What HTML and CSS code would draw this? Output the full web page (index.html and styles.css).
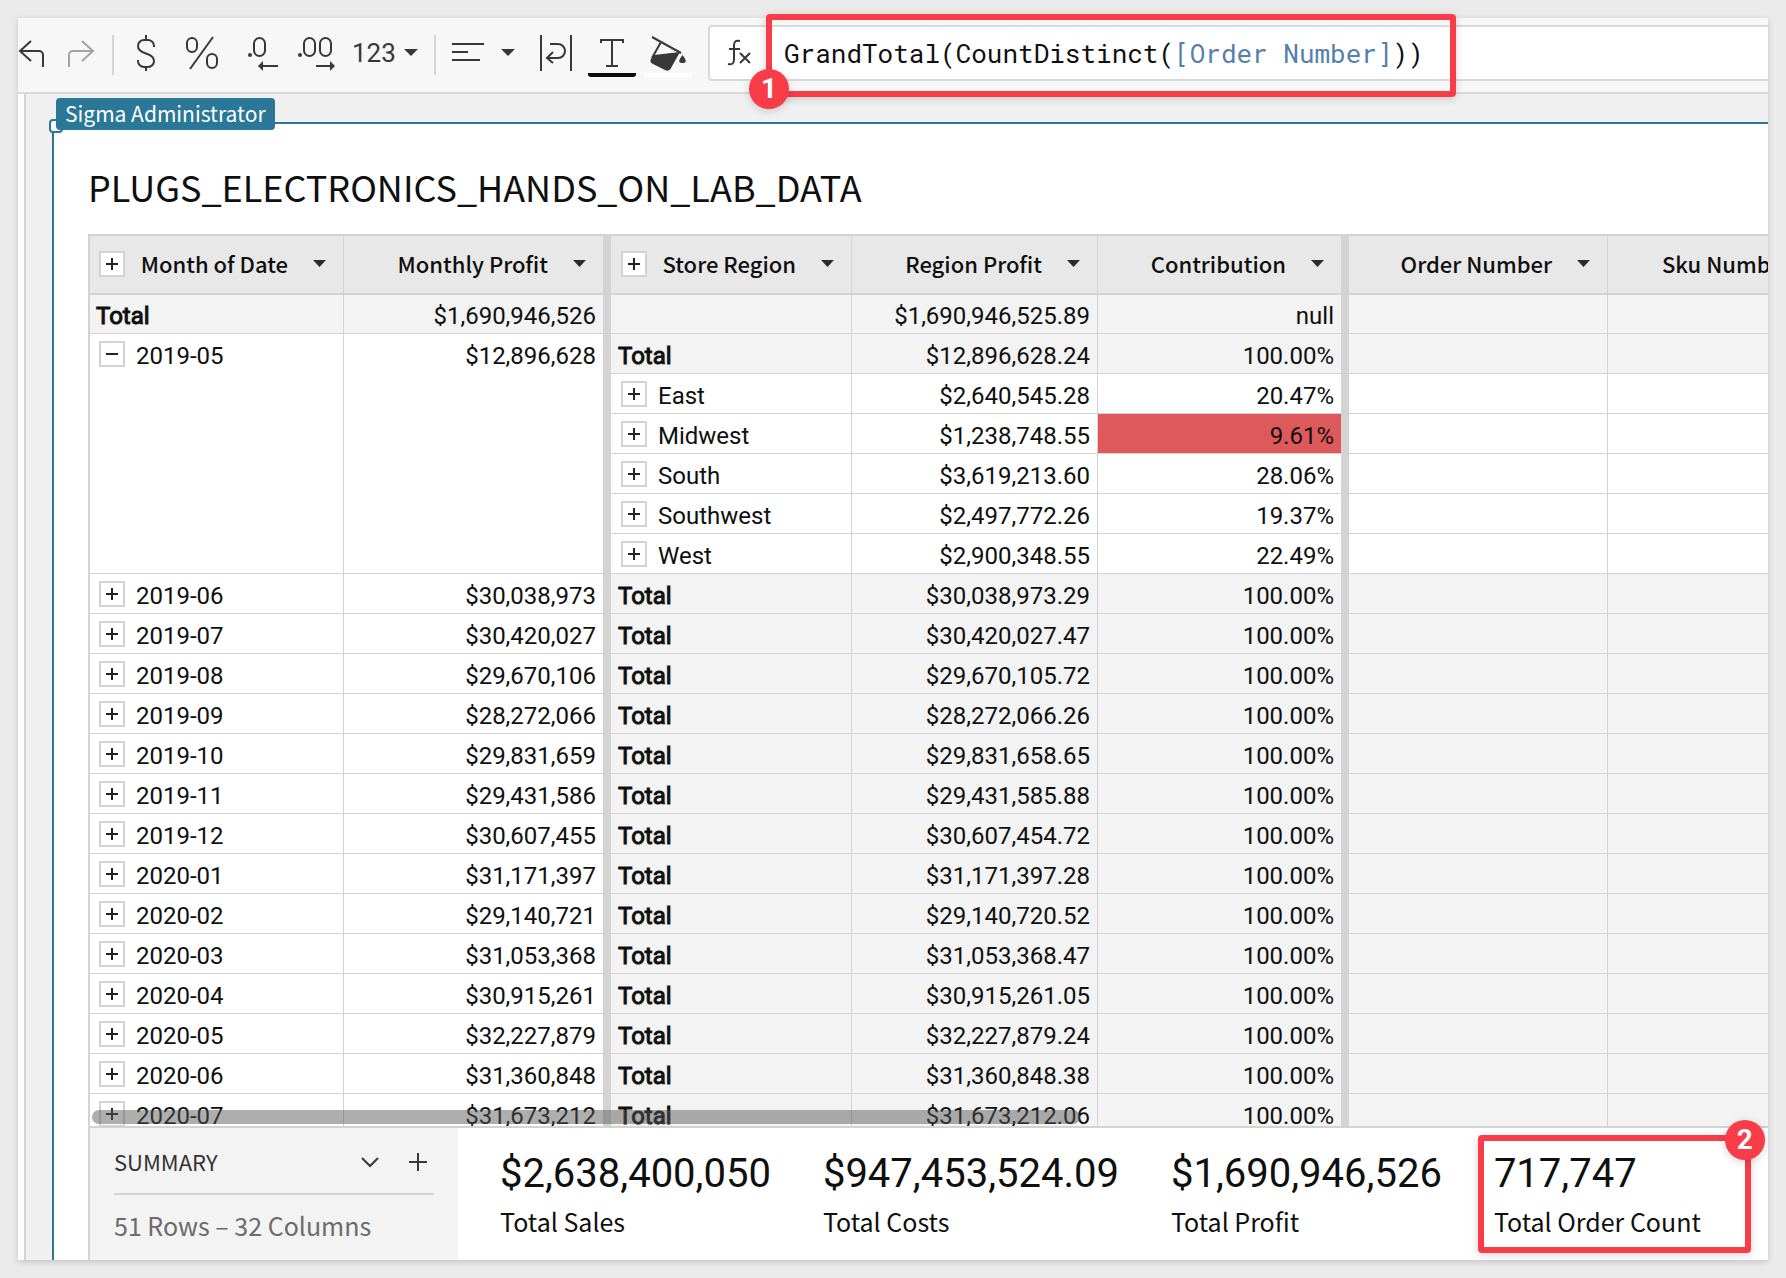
FILE: index.html
```html
<!DOCTYPE html>
<html lang="en">
<head>
<meta charset="utf-8">
<title>PLUGS_ELECTRONICS_HANDS_ON_LAB_DATA</title>
<link rel="stylesheet" href="styles.css">
</head>
<body>
<main class="app">
  <header class="toolbar">
    <button class="tool" aria-label="Undo"><svg width="32" height="44"><path d="M13 8 2 18l11 10M2 18h19a4 4 0 0 1 4 4v12"/></svg></button>
    <button class="tool muted" aria-label="Redo"><svg width="30" height="44"><path d="M16 8l11 10-11 10M27 18H7a4 4 0 0 0-4 4v12"/></svg></button>
    <span class="separator"></span>
    <button class="tool" aria-label="Currency"><svg width="32" height="44"><path d="M24 14v-1a6 6 0 0 0-6-6h-4a6 6 0 0 0-6 6c0 4 3 6 8 7.500s8 3.500 8 7.500a6 6 0 0 1-6 6h-4a6 6 0 0 1-6-6v-1M16 2v5M16 34v4"/></svg></button>
    <button class="tool" aria-label="Percent"><svg width="48" height="44"><rect x="9" y="5" width="10" height="14" rx="5"/><rect x="29" y="21" width="10" height="14" rx="5"/><path d="M35 4 12 36"/></svg></button>
    <button class="tool" aria-label="Decrease decimals"><svg width="38" height="44"><circle class="solid" cx="8" cy="22" r="2"/><rect x="12" y="5" width="11" height="18" rx="5.500"/><path d="M20 33h16"/><path class="solid" d="M16 33l5-5v10z"/></svg></button>
    <button class="tool" aria-label="Increase decimals"><svg width="40" height="44"><circle class="solid" cx="4" cy="22" r="2"/><rect x="8" y="5" width="11" height="18" rx="5.500"/><rect x="24" y="5" width="11" height="18" rx="5.500"/><path d="M20 33h15"/><path class="solid" d="M39 33l-5-5v10z"/></svg></button>
    <button class="tool format">123<svg width="14" height="8"><path class="solid" d="M0 0h14L7 7z"/></svg></button>
    <span class="separator"></span>
    <button class="tool" aria-label="Align"><svg width="64" height="44"><path d="M0 11h32M0 19h16M0 27h28"/><path class="solid" d="M49 16h14l-7 7z"/></svg></button>
    <button class="tool" aria-label="Wrap text"><svg width="40" height="44"><path d="M9 2v36M39 2v36M18 11h8a7 7 0 0 1 0 14H15M21 19l-6 6 6 5"/></svg></button>
    <div class="colors">
      <button class="tool" aria-label="Text color"><svg width="48" height="44"><path d="M13 10V7h22v3M24 7v26M18 33h12"/><path class="ink" d="M0 40h48v1a3 3 0 0 1-3 3H3a3 3 0 0 1-3-3z"/></svg></button>
      <button class="tool" aria-label="Fill color"><svg width="48" height="44"><path d="M8 4l29 16M17 9 8 25"/><path class="solid" d="M10 22l26-3-9 16q-2 4-6 2L9 31q-4-2-2-5zM38.500 22q6.500 8 0 8t0-8z"/><path class="paper" d="M0 40h48v1a3 3 0 0 1-3 3H3a3 3 0 0 1-3-3z"/></svg></button>
    </div>
    <div class="formula">
      <svg class="fx" width="28" height="30" aria-hidden="true"><path d="M13 3c-5-1-6 1-6 5v13c0 4-1 6-6 5M2 11h11M13 15l10 10M23 15 13 25"/></svg>
      <div class="code" role="textbox" aria-label="Formula" contenteditable="true" spellcheck="false">GrandTotal(CountDistinct(<span class="ref">[Order Number]</span>))</div>
      <div class="callout callout-formula"><span class="badge">1</span></div>
    </div>
  </header>

  <div class="canvas">
    <section class="element">
      <span class="handle"></span>
      <span class="owner">Sigma Administrator</span>
      <h1 class="title">PLUGS_ELECTRONICS_HANDS_ON_LAB_DATA</h1>
      <div class="grid">
        <table>
          <colgroup><col class="c1"><col class="c2"><col class="c3"><col class="c4"><col class="c5"><col class="c6"><col class="c7"></colgroup>
          <thead>
            <tr>
              <th><div class="head"><button class="toggle" aria-label="Expand all"></button><span>Month of Date</span><button class="caret" aria-label="Column menu"></button></div></th>
              <th class="edge"><div class="head"><span>Monthly Profit</span><button class="caret" aria-label="Column menu"></button></div></th>
              <th><div class="head"><button class="toggle" aria-label="Expand all"></button><span>Store Region</span><button class="caret" aria-label="Column menu"></button></div></th>
              <th><div class="head"><span>Region Profit</span><button class="caret" aria-label="Column menu"></button></div></th>
              <th class="edge"><div class="head"><span>Contribution</span><button class="caret" aria-label="Column menu"></button></div></th>
              <th><div class="head"><span>Order Number</span><button class="caret" aria-label="Column menu"></button></div></th>
              <th><div class="head"><span>Sku Number</span><button class="caret" aria-label="Column menu"></button></div></th>
            </tr>
          </thead>
          <tbody>
            <tr class="grand"><td class="total">Total</td><td class="num edge">$1,690,946,526</td><td></td><td class="num">$1,690,946,525.89</td><td class="num edge">null</td><td></td><td></td></tr>
            <tr class="sum"><td class="key" rowspan="6"><div class="item"><button class="toggle open" aria-label="Collapse"></button>2019-05</div></td><td class="key num edge" rowspan="6">$12,896,628</td><td class="total">Total</td><td class="num">$12,896,628.24</td><td class="num edge">100.00%</td><td></td><td></td></tr>
            <tr><td class="region"><div class="item"><button class="toggle" aria-label="Expand"></button>East</div></td><td class="num">$2,640,545.28</td><td class="num edge">20.47%</td><td></td><td></td></tr>
            <tr><td class="region"><div class="item"><button class="toggle" aria-label="Expand"></button>Midwest</div></td><td class="num">$1,238,748.55</td><td class="num edge alert">9.61%</td><td></td><td></td></tr>
            <tr><td class="region"><div class="item"><button class="toggle" aria-label="Expand"></button>South</div></td><td class="num">$3,619,213.60</td><td class="num edge">28.06%</td><td></td><td></td></tr>
            <tr><td class="region"><div class="item"><button class="toggle" aria-label="Expand"></button>Southwest</div></td><td class="num">$2,497,772.26</td><td class="num edge">19.37%</td><td></td><td></td></tr>
            <tr><td class="region"><div class="item"><button class="toggle" aria-label="Expand"></button>West</div></td><td class="num">$2,900,348.55</td><td class="num edge">22.49%</td><td></td><td></td></tr>
            <tr class="sum"><td class="key"><div class="item"><button class="toggle" aria-label="Expand"></button>2019-06</div></td><td class="key num edge">$30,038,973</td><td class="total">Total</td><td class="num">$30,038,973.29</td><td class="num edge">100.00%</td><td></td><td></td></tr>
            <tr class="sum"><td class="key"><div class="item"><button class="toggle" aria-label="Expand"></button>2019-07</div></td><td class="key num edge">$30,420,027</td><td class="total">Total</td><td class="num">$30,420,027.47</td><td class="num edge">100.00%</td><td></td><td></td></tr>
            <tr class="sum"><td class="key"><div class="item"><button class="toggle" aria-label="Expand"></button>2019-08</div></td><td class="key num edge">$29,670,106</td><td class="total">Total</td><td class="num">$29,670,105.72</td><td class="num edge">100.00%</td><td></td><td></td></tr>
            <tr class="sum"><td class="key"><div class="item"><button class="toggle" aria-label="Expand"></button>2019-09</div></td><td class="key num edge">$28,272,066</td><td class="total">Total</td><td class="num">$28,272,066.26</td><td class="num edge">100.00%</td><td></td><td></td></tr>
            <tr class="sum"><td class="key"><div class="item"><button class="toggle" aria-label="Expand"></button>2019-10</div></td><td class="key num edge">$29,831,659</td><td class="total">Total</td><td class="num">$29,831,658.65</td><td class="num edge">100.00%</td><td></td><td></td></tr>
            <tr class="sum"><td class="key"><div class="item"><button class="toggle" aria-label="Expand"></button>2019-11</div></td><td class="key num edge">$29,431,586</td><td class="total">Total</td><td class="num">$29,431,585.88</td><td class="num edge">100.00%</td><td></td><td></td></tr>
            <tr class="sum"><td class="key"><div class="item"><button class="toggle" aria-label="Expand"></button>2019-12</div></td><td class="key num edge">$30,607,455</td><td class="total">Total</td><td class="num">$30,607,454.72</td><td class="num edge">100.00%</td><td></td><td></td></tr>
            <tr class="sum"><td class="key"><div class="item"><button class="toggle" aria-label="Expand"></button>2020-01</div></td><td class="key num edge">$31,171,397</td><td class="total">Total</td><td class="num">$31,171,397.28</td><td class="num edge">100.00%</td><td></td><td></td></tr>
            <tr class="sum"><td class="key"><div class="item"><button class="toggle" aria-label="Expand"></button>2020-02</div></td><td class="key num edge">$29,140,721</td><td class="total">Total</td><td class="num">$29,140,720.52</td><td class="num edge">100.00%</td><td></td><td></td></tr>
            <tr class="sum"><td class="key"><div class="item"><button class="toggle" aria-label="Expand"></button>2020-03</div></td><td class="key num edge">$31,053,368</td><td class="total">Total</td><td class="num">$31,053,368.47</td><td class="num edge">100.00%</td><td></td><td></td></tr>
            <tr class="sum"><td class="key"><div class="item"><button class="toggle" aria-label="Expand"></button>2020-04</div></td><td class="key num edge">$30,915,261</td><td class="total">Total</td><td class="num">$30,915,261.05</td><td class="num edge">100.00%</td><td></td><td></td></tr>
            <tr class="sum"><td class="key"><div class="item"><button class="toggle" aria-label="Expand"></button>2020-05</div></td><td class="key num edge">$32,227,879</td><td class="total">Total</td><td class="num">$32,227,879.24</td><td class="num edge">100.00%</td><td></td><td></td></tr>
            <tr class="sum"><td class="key"><div class="item"><button class="toggle" aria-label="Expand"></button>2020-06</div></td><td class="key num edge">$31,360,848</td><td class="total">Total</td><td class="num">$31,360,848.38</td><td class="num edge">100.00%</td><td></td><td></td></tr>
            <tr class="sum"><td class="key"><div class="item"><button class="toggle" aria-label="Expand"></button>2020-07</div></td><td class="key num edge">$31,673,212</td><td class="total">Total</td><td class="num">$31,673,212.06</td><td class="num edge">100.00%</td><td></td><td></td></tr>
          </tbody>
        </table>
        <span class="scrollbar"></span>
      </div>
      <footer class="summary">
        <div class="panel">
          <div class="panel-head">
            <h2>SUMMARY</h2>
            <button class="tool" aria-label="Collapse summary"><svg width="20" height="20"><path d="M2 6l8 8 8-8"/></svg></button>
            <button class="tool" aria-label="Add summary"><svg width="20" height="20"><path d="M10 1v18M1 10h18"/></svg></button>
          </div>
          <p class="counts">51 Rows – 32 Columns</p>
        </div>
        <dl class="metrics">
          <div class="metric"><dd>$2,638,400,050</dd><dt>Total Sales</dt></div>
          <div class="metric"><dd>$947,453,524.09</dd><dt>Total Costs</dt></div>
          <div class="metric"><dd>$1,690,946,526</dd><dt>Total Profit</dt></div>
          <div class="metric"><dd>717,747</dd><dt>Total Order Count</dt><div class="callout callout-metric"><span class="badge">2</span></div></div>
        </dl>
      </footer>
    </section>
  </div>
</main>
</body>
</html>
```
FILE: styles.css
```css
:root {
  --line: #d3d3d3;
  --teal: #2a7797;
  --red: #f83d49;
  --ink: #0f0f0f;
  --icon: #383838;
  --ui: "Source Sans Pro", "Noto Sans CJK SC", sans-serif;
  --data: Roboto, "Liberation Sans", sans-serif;
}

* { box-sizing: border-box; }

body {
  margin: 0;
  padding: 18px;
  background: #eaeaea;
  color: var(--ink);
  font-family: var(--ui);
  overflow: hidden;
}

h1, h2, p, dl, dd, dt { margin: 0; font-weight: 400; }

button {
  padding: 0;
  border: 0;
  background: none;
  color: inherit;
  font: inherit;
}

svg {
  display: block;
  fill: none;
  stroke: var(--icon);
  stroke-width: 2;
}

.solid { fill: var(--icon); stroke: none; }
.ink { fill: #0a0a0a; stroke: none; }
.paper { fill: #fff; stroke: none; }

.app {
  display: flex;
  flex-direction: column;
  height: calc(100vh - 36px);
  box-shadow: 0 2px 6px rgba(0, 0, 0, 0.16);
}

/* Toolbar */
.toolbar {
  display: flex;
  align-items: center;
  gap: 16px;
  height: 76px;
  flex: none;
  background: #f7f7f7;
  border-bottom: 2px solid #d9d9d9;
}

.tool { flex: none; }
.muted svg { stroke: #a3a3a3; }
.separator { flex: none; width: 2px; height: 40px; background: #d6d6d6; }

.format {
  display: flex;
  align-items: center;
  justify-content: space-between;
  width: 66px;
  padding-bottom: 4px;
  color: var(--icon);
  font: 26px/40px var(--data);
}

.colors { display: flex; gap: 8px; }

.formula {
  position: relative;
  flex: 1;
  min-width: 0;
  display: flex;
  align-items: center;
  gap: 29px;
  height: 56px;
  margin-bottom: 4px;
  padding-left: 17px;
  background: #fff;
  border: 2px solid #d9d9d9;
  border-right: 0;
  border-radius: 4px 0 0 4px;
}

.fx { flex: none; }

.code {
  font: 26px/40px "Roboto Mono", "Liberation Mono", monospace;
  white-space: nowrap;
  outline: 0;
}

.ref { color: #5480ad; }

/* Numbered annotations */
.callout {
  position: absolute;
  border: 6px solid var(--red);
  border-radius: 4px;
  box-shadow: 0 2px 8px rgba(0, 0, 0, 0.16);
  pointer-events: none;
}

.badge {
  position: absolute;
  width: 40px;
  height: 40px;
  border-radius: 50%;
  background: var(--red);
  box-shadow: 0 2px 8px rgba(0, 0, 0, 0.16);
  color: #fff;
  font: 700 28px/40px var(--data);
  text-align: center;
}

.callout-formula { left: 56px; top: -13px; width: 690px; height: 83px; z-index: 2; }
.callout-formula .badge { left: -23px; bottom: -18px; }
.callout-metric { left: -16px; top: -11px; width: 273px; height: 118px; z-index: 2; }
.callout-metric .badge { right: -20px; top: -21px; }

/* Canvas */
.canvas {
  flex: 1;
  min-height: 0;
  display: flex;
  padding: 28px 0 0 26px;
  overflow: hidden;
  background: #f0f0f0;
  border-left: 2px solid var(--line);
  margin-left: 6px;
  box-shadow: -6px 0 0 #fff;
}

.element {
  position: relative;
  flex: 1;
  min-width: 0;
  display: flex;
  flex-direction: column;
  padding-left: 34px;
  background: #fff;
  border-left: 2px solid var(--teal);
  border-top: 2px solid var(--teal);
}

.handle {
  position: absolute;
  left: -5px;
  top: -5px;
  width: 14px;
  height: 14px;
  background: #fff;
  border: 2px solid var(--teal);
  border-radius: 4px;
}

.owner {
  position: absolute;
  left: 2px;
  top: -26px;
  padding: 0 9px 2px;
  border-radius: 4px;
  background: var(--teal);
  color: #fff;
  font-size: 21px;
  line-height: 30px;
}

.title {
  padding: 38px 0 24px;
  font-size: 36px;
  line-height: 48px;
  white-space: nowrap;
}

/* Pivot table */
.grid {
  position: relative;
  flex: 1 1 0;
  min-height: 0;
  overflow: hidden;
  border-left: 2px solid var(--line);
  border-top: 2px solid var(--line);
}

table {
  width: 1758px;
  table-layout: fixed;
  border-collapse: separate;
  border-spacing: 0;
}

.c1 { width: 254px; }
.c2 { width: 267px; }
.c3 { width: 241px; }
.c4 { width: 246px; }
.c5 { width: 251px; }
.c6 { width: 259px; }
.c7 { width: 240px; }

th, td {
  border-right: 1px solid var(--line);
  border-bottom: 1px solid var(--line);
}

th {
  height: 59px;
  padding: 0 17px 2px 9px;
  background: #e8e8e8;
  border-bottom-width: 2px;
  font-size: 22px;
  font-weight: 500;
  line-height: 32px;
  white-space: nowrap;
}

td {
  height: 40px;
  padding: 5px 7px 0 6px;
  vertical-align: top;
  font: 24px/34px var(--data);
  white-space: nowrap;
}

th.edge, td.edge { border-right-width: 8px; }
th.edge + th { padding-left: 10px; }
td.edge + td, td.region { padding-left: 7px; }

.head { display: flex; align-items: center; justify-content: flex-end; }
.head .toggle { margin-right: auto; }
.head span { padding-bottom: 2px; }

.caret {
  width: 13px;
  height: 7px;
  margin-left: 25px;
  background: #2b2b2b;
  clip-path: polygon(0 0, 100% 0, 50% 100%);
}

.item { display: flex; gap: 11px; padding-left: 3px; }
.item .toggle { margin-top: 2px; }

.toggle {
  flex: none;
  width: 26px;
  height: 26px;
  border: 2px solid var(--line);
  background:
    linear-gradient(#222, #222) center / 12px 2px no-repeat,
    linear-gradient(#222, #222) center / 2px 12px no-repeat,
    #fff;
}

.open { background: linear-gradient(#222, #222) center / 12px 2px no-repeat, #fff; }

.num { text-align: right; }
.total { -webkit-text-stroke: 1px var(--ink); }
.grand td { height: 39px; padding-top: 4px; background: #f3f3f3; }
.sum td { background: #f3f3f3; }
.sum td.key { background: #fff; }
td.alert { background: #dd595c; }

.scrollbar {
  position: absolute;
  left: 2px;
  bottom: 2px;
  width: 988px;
  height: 14px;
  border-radius: 7px;
  background: rgba(85, 85, 85, 0.48);
}

/* Summary bar */
.summary {
  flex: none;
  display: flex;
  height: 134px;
  border-top: 2px solid var(--line);
  border-left: 2px solid var(--line);
}

.panel {
  flex: none;
  width: 368px;
  padding: 0 24px;
  background: #f3f3f3;
}

.panel-head {
  display: flex;
  align-items: center;
  gap: 28px;
  height: 67px;
  padding-right: 6px;
  border-bottom: 2px solid var(--line);
}

.panel-head .tool { padding-top: 2px; }
.panel-head h2 { flex: 1; color: #333; font-size: 22px; line-height: 32px; }
.counts { color: #6b6b6b; font-size: 25px; line-height: 60px; }

.metrics { display: flex; gap: 52px; padding: 18px 0 0 42px; }
.metric { position: relative; display: flex; flex-direction: column; white-space: nowrap; }
.metric dd { font: 40px/56px var(--data); }
.metric dt { font-size: 25px; line-height: 38px; }
```
